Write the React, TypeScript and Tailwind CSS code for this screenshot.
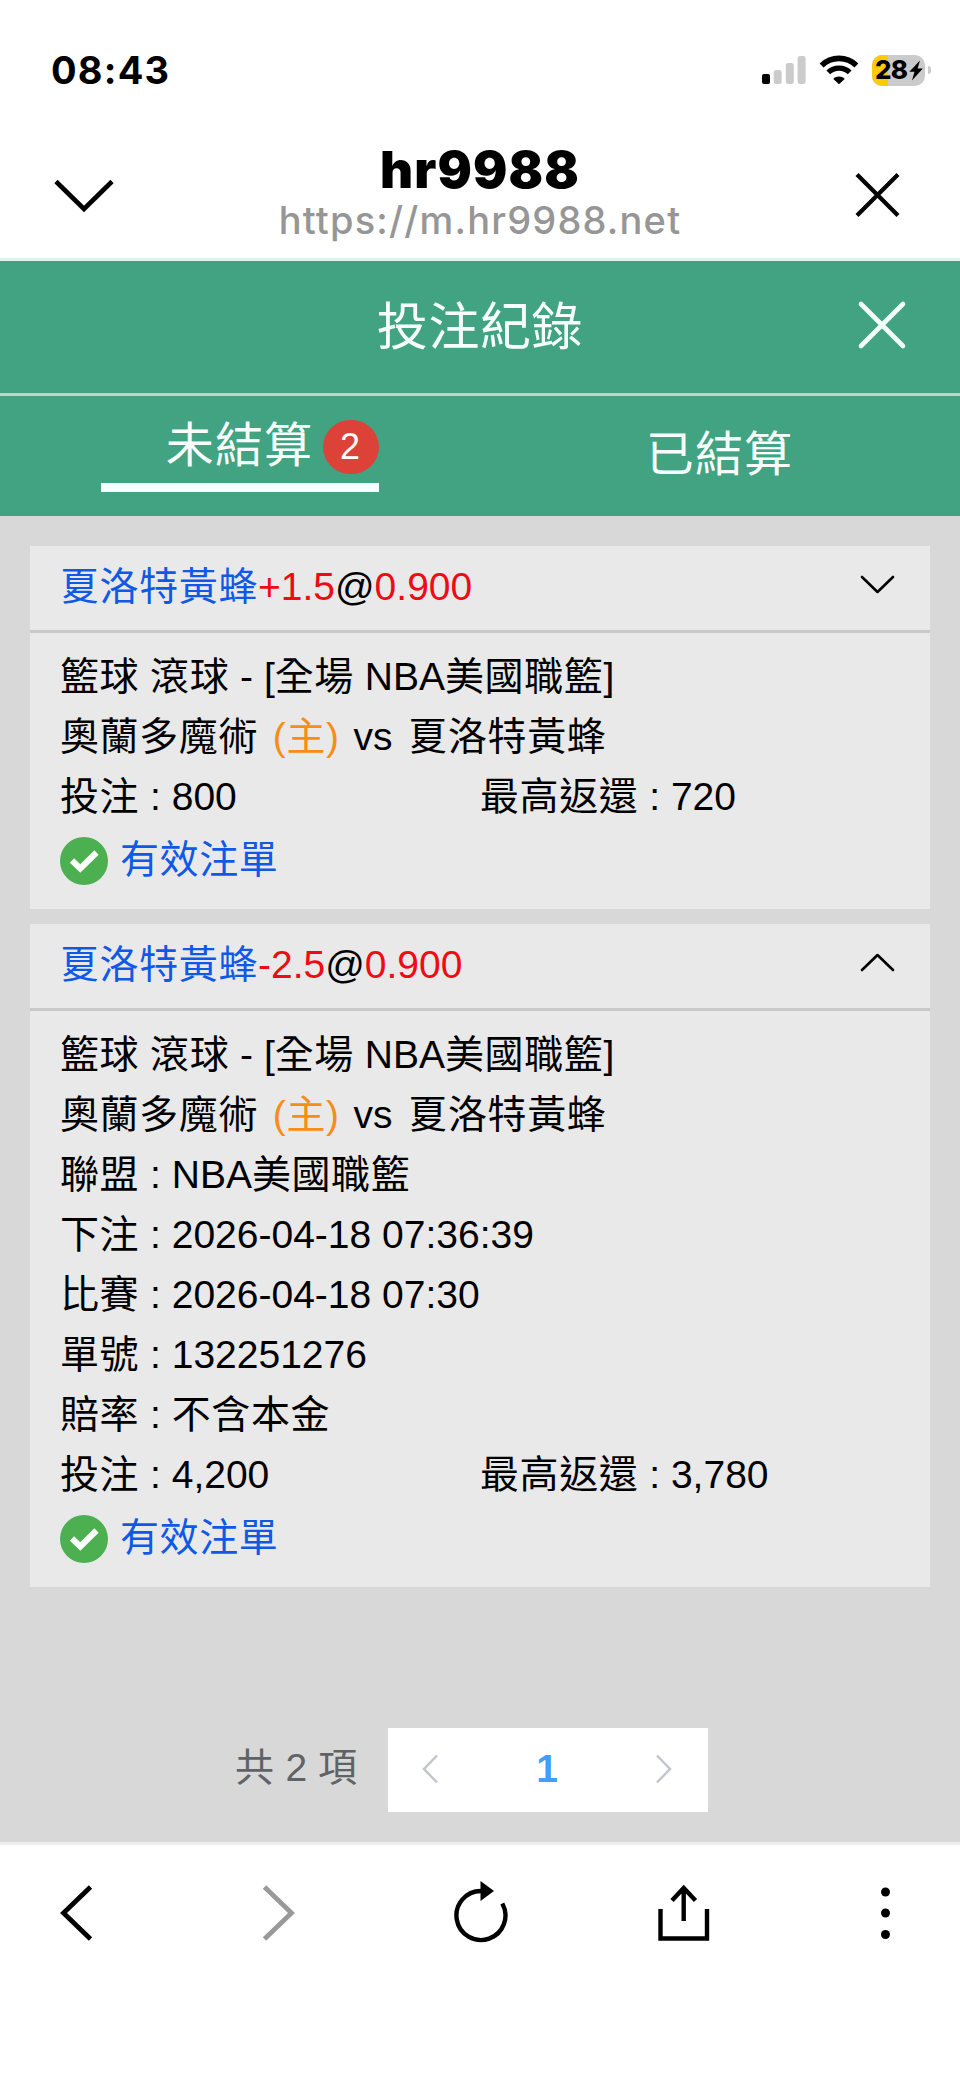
import React from 'react';

interface Bet {
  id: string;
  team: string;
  handicap: string;
  odds: string;
  expanded: boolean;
  home: string;
  away: string;
  details: { label: string; value: React.ReactNode }[];
  stake: string;
  maxReturn: string;
}

const bets: Bet[] = [
  {
    id: '1',
    team: '夏洛特黃蜂',
    handicap: '+1.5',
    odds: '0.900',
    expanded: false,
    home: '奧蘭多魔術',
    away: '夏洛特黃蜂',
    details: [],
    stake: '800',
    maxReturn: '720',
  },
  {
    id: '2',
    team: '夏洛特黃蜂',
    handicap: '-2.5',
    odds: '0.900',
    expanded: true,
    home: '奧蘭多魔術',
    away: '夏洛特黃蜂',
    details: [
      { label: '聯盟', value: <>NBA<Han>美國職籃</Han></> },
      { label: '下注', value: '2026-04-18 07:36:39' },
      { label: '比賽', value: '2026-04-18 07:30' },
      { label: '單號', value: '132251276' },
      { label: '賠率', value: <Han>不含本金</Han> },
    ],
    stake: '4,200',
    maxReturn: '3,780',
  },
];

// Chinese text is tracked slightly wider than the digits around it
function Han({ children }: { children: React.ReactNode }) {
  return <span className="tracking-[0.6px]">{children}</span>;
}

const StatusBar = () => (
  <div className="flex h-[140px] items-center justify-between pl-[51px] pr-[29px]">
    <span className="font-['Inter',sans-serif] text-[38px] font-bold leading-none tracking-[1.2px]">08:43</span>
    <div className="flex items-center">
      <svg className="h-7 w-11" viewBox="0 0 44 28">
        <rect x="0" y="18" width="8" height="10" rx="2" fill="#000" />
        <rect x="11.7" y="14" width="8" height="14" rx="2.5" fill="#cbcbcb" />
        <rect x="23.8" y="7" width="8" height="21" rx="2.5" fill="#cbcbcb" />
        <rect x="35.6" y="0" width="8" height="28" rx="2.5" fill="#cbcbcb" />
      </svg>
      <svg className="ml-[13px] h-[30px] w-10" viewBox="0 0 40 30">
        <path d="M2.6 10.4a25 25 0 0 1 34.8 0" fill="none" stroke="#000" strokeWidth="5.6" />
        <path d="M9.3 17.4a15.4 15.4 0 0 1 21.4 0" fill="none" stroke="#000" strokeWidth="5.4" />
        <path d="M20 29.3l-5.7-5.4c2.8-3.2 8.6-3.2 11.4 0z" fill="#000" />
      </svg>
      <div className="ml-[13px] flex items-center">
        <div className="relative flex h-[31px] w-[53px] items-center overflow-hidden rounded-[10px] bg-[#cbcbcb] pl-[3px]">
          <div className="absolute inset-y-0 left-0 w-4 bg-[#fbcb0a]" />
          <span className="relative font-['Inter',sans-serif] text-[26px] font-extrabold leading-none tracking-[-0.8px]">28</span>
          <svg className="absolute right-[2px] top-[5px] h-[21px] w-[14px]" viewBox="0 0 14 20">
            <path d="M11 0L0.3 11.2h5.2L3 20L13.8 8H8.6z" fill="#000" />
          </svg>
        </div>
        <div className="ml-[3px] h-2 w-[3px] rounded-r-full bg-[#cbcbcb]" />
      </div>
    </div>
  </div>
);

const BrowserHeader = () => (
  <div className="flex h-[118px] items-start justify-between pl-[53px] pr-[59px]">
    <svg className="mt-[38px] h-9 w-[62px]" viewBox="0 0 62 36" fill="none" stroke="#000" strokeWidth="4.6">
      <path d="M3 3.5L31 31L59 3.5" />
    </svg>
    <div className="mr-2 flex flex-col items-center font-['Inter',sans-serif]">
      <h1 className="text-[51px] font-black leading-[60px] tracking-[1.1px]">hr9988</h1>
      <p className="text-[38px] font-medium leading-[40px] tracking-[1.2px] text-[#969696]">https://m.hr9988.net</p>
    </div>
    <svg className="mt-[31px] h-12 w-12" viewBox="0 0 48 48" fill="none" stroke="#000" strokeWidth="4.2">
      <path d="M4 3.5L45 44.5M45 3.5L4 44.5" />
    </svg>
  </div>
);

const PageHeader = () => (
  <div className="relative flex h-[138px] items-center justify-center border-b-[3px] border-t-[3px] border-b-[#c3d3cb] border-t-[#dbf3ea] bg-[#41a381]">
    <h2 className="text-[51px] font-normal leading-none tracking-[0.6px] text-[#f7fffd]">投注紀錄</h2>
    <svg
      className="absolute right-[53px] top-[39px] h-[50px] w-[50px]"
      viewBox="0 0 50 50"
      fill="none"
      stroke="#f4fffc"
      strokeWidth="4.6"
      strokeLinecap="round"
    >
      <path d="M4 4L46 46M46 4L4 46" />
    </svg>
  </div>
);

const Tabs = () => (
  <div className="grid h-[120px] grid-cols-2 bg-[#41a381] text-[48px] leading-none tracking-[1.2px] text-[#f7fffd]">
    <div className="flex justify-center pt-6">
      <div className="relative h-[72px] w-[278px] border-b-[9px] border-[#f5fffd] pr-px pt-[2px] text-center">
        未結算
        <span className="absolute right-0 top-0 flex h-[54px] w-[56px] items-center justify-center rounded-full bg-[#dd4239] pr-[2px] text-[36px] tracking-normal">
          2
        </span>
      </div>
    </div>
    <div className="pr-px pt-[35px] text-center">已結算</div>
  </div>
);

const BetCard = ({ bet }: { bet: Bet }) => (
  <div className="bg-[#e9e9e9]">
    <div className="flex h-[87px] items-center justify-between border-b-[3px] border-[#c9c9c9] pb-px pl-[30px] pr-[34px]">
      <div>
        <span className="text-[#0f59e6]"><Han>{bet.team}</Han></span>
        <span className="text-[#f00a14]">{bet.handicap}</span>
        @
        <span className="text-[#f00a14]">{bet.odds}</span>
      </div>
      <svg
        className="mb-[6px] h-[21px] w-9"
        viewBox="0 0 36 21"
        fill="none"
        stroke="#000"
        strokeWidth="2.6"
        strokeLinecap="round"
        strokeLinejoin="round"
      >
        <path d={bet.expanded ? 'M2 18L17.5 3L33 18' : 'M2 3L17.5 18L33 3'} />
      </svg>
    </div>
    <div className="px-[30px] pb-[15px] pt-[14px] leading-[60px]">
      <div>
        <Han>籃球</Han> <Han>滾球</Han> - [<Han>全場</Han> NBA<Han>美國職籃</Han>]
      </div>
      <div>
        <Han>{bet.home}</Han>{' '}
        <span className="pl-[4px] pr-px text-[#f78d16]"><Han>(主)</Han></span>{' '}
        <span className="px-[2px]">vs</span> <span className="pl-[3px]"><Han>{bet.away}</Han></span>
      </div>
      {bet.details.map((row) => (
        <div key={row.label}>
          <Han>{row.label}</Han> : {row.value}
        </div>
      ))}
      <div className="grid grid-cols-2">
        <div><Han>投注</Han> : {bet.stake}</div>
        <div><Han>最高返還</Han> : {bet.maxReturn}</div>
      </div>
      <div className="flex h-[67px] items-center gap-3 text-[#0f59e6]">
        <svg className="h-12 w-12" viewBox="0 0 48 48">
          <circle cx="24" cy="24" r="24" fill="#4caf50" />
          <path d="M12 23.5L20.3 31.5L36.5 15.5" fill="none" stroke="#fff" strokeWidth="6" />
        </svg>
        <span className="pb-[2px]"><Han>有效注單</Han></span>
      </div>
    </div>
  </div>
);

const Pagination = () => (
  <div className="flex h-[84px] items-center pl-[235px] text-[#606266]">
    <span className="w-[153px] pb-[3px]"><Han>共</Han> 2 <Han>項</Han></span>
    <div className="flex h-full w-80 items-center justify-between bg-white pb-[2px] pl-[34px] pr-[36px]">
      <svg className="h-[30px] w-4" viewBox="0 0 16 30" fill="none" stroke="#c0c4cc" strokeWidth="2.4">
        <path d="M15 1.5L2 15L15 28.5" />
      </svg>
      <span className="font-bold text-[#409eff]">1</span>
      <svg className="h-[30px] w-4" viewBox="0 0 16 30" fill="none" stroke="#c0c4cc" strokeWidth="2.4">
        <path d="M1 1.5L14 15L1 28.5" />
      </svg>
    </div>
  </div>
);

const BottomBar = () => (
  <div className="flex h-[237px] justify-between border-t-[3px] border-[#eeeeee] bg-white pl-[45px] pr-[43px] pt-9">
    <svg className="h-16 w-16" viewBox="0 0 64 64" fill="none" stroke="#000" strokeWidth="4.8">
      <path d="M45.5 6L18.5 32L45.5 58" />
    </svg>
    <svg className="h-16 w-16" viewBox="0 0 64 64" fill="none" stroke="#999" strokeWidth="4.8">
      <path d="M17.5 6L44.5 32L17.5 58" />
    </svg>
    <svg className="h-16 w-16" viewBox="0 0 64 64" fill="none" stroke="#000" strokeWidth="4.4">
      <path d="M32 10A24.5 24.5 0 1 0 53.3 22.5" />
      <path d="M31.5 0V20L45 10z" fill="#000" stroke="none" />
    </svg>
    <svg className="h-16 w-16" viewBox="0 0 64 64" fill="none" stroke="#000" strokeWidth="4.4">
      <path d="M9.5 28V57.5H56V28" />
      <path d="M32.7 40V6M21 19.5L32.7 7L44.5 19.5" />
    </svg>
    <svg className="h-16 w-16" viewBox="0 0 64 64">
      <circle cx="32.5" cy="11" r="4.5" />
      <circle cx="32.5" cy="32" r="4.5" />
      <circle cx="32.5" cy="53.5" r="4.5" />
    </svg>
  </div>
);

const App: React.FC = () => {
  return (
    <div className="flex h-[2079px] w-[960px] flex-col bg-white font-['Liberation_Sans','Noto_Sans_CJK_TC',sans-serif] text-[39px] text-black">
      <StatusBar />
      <BrowserHeader />
      <PageHeader />
      <Tabs />
      {/* Bet list */}
      <div className="flex h-[1326px] flex-col bg-[#d8d8d8] px-[30px] pt-[30px]">
        <div className="space-y-[15px]">
          {bets.map((bet) => (
            <BetCard key={bet.id} bet={bet} />
          ))}
        </div>
        <div className="-mx-[30px] mt-[141px]">
          <Pagination />
        </div>
      </div>
      <BottomBar />
    </div>
  );
};

export default App;
